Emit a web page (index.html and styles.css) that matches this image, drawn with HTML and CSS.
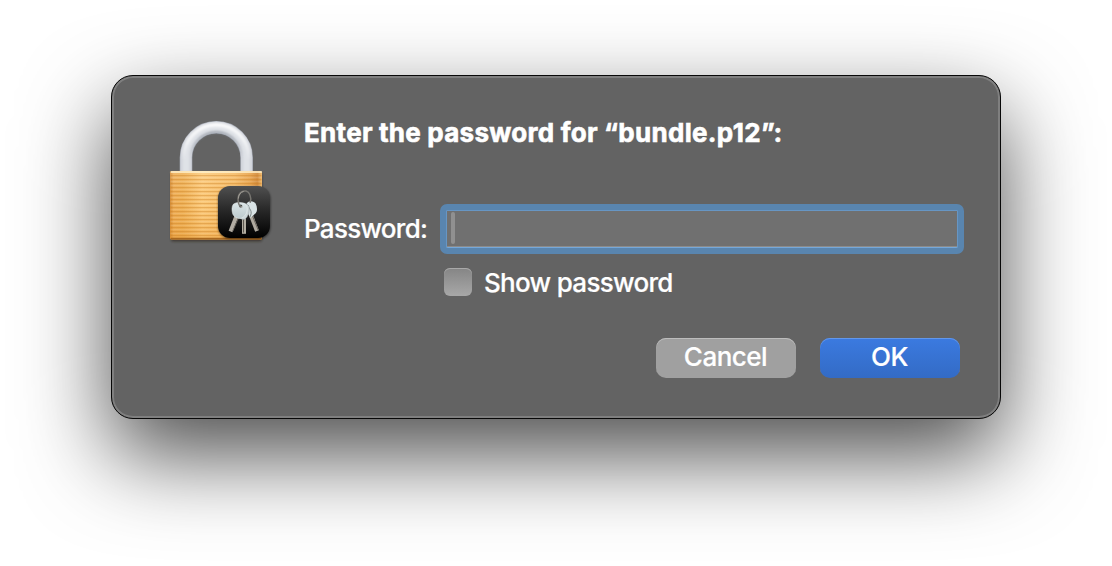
FILE: index.html
```html
<!DOCTYPE html>
<html lang="en">
<head>
<meta charset="utf-8">
<title>Password</title>
<link rel="stylesheet" href="styles.css">
</head>
<body>
<form class="dialog">
  <svg class="lock" viewBox="160 110 120 140" width="120" height="140" aria-hidden="true">
    <defs>
      <linearGradient id="brass" x1="170" x2="262" y1="0" y2="0" gradientUnits="userSpaceOnUse">
        <stop offset="0" stop-color="#d18a35"/><stop offset=".04" stop-color="#efb05a"/><stop offset=".14" stop-color="#efb258"/><stop offset=".35" stop-color="#fccb7d"/><stop offset=".7" stop-color="#f6bc67"/><stop offset=".87" stop-color="#e7a24b"/><stop offset=".95" stop-color="#d18735"/><stop offset="1" stop-color="#efb664"/>
      </linearGradient>
      <linearGradient id="brassFade" x1="0" x2="0" y1="0" y2="1">
        <stop offset="0" stop-color="#fff" stop-opacity=".12"/><stop offset=".5" stop-color="#e89a30" stop-opacity="0"/><stop offset="1" stop-color="#e2922b" stop-opacity=".35"/>
      </linearGradient>
      <pattern id="grooves" x="170" y="175" width="92" height="4" patternUnits="userSpaceOnUse">
        <rect width="92" height="1.2" fill="#c97b20" fill-opacity=".38"/><rect y="2" width="92" height="1" fill="#fff" fill-opacity=".1"/>
      </pattern>
      <linearGradient id="badge" x1="0" x2="0" y1="0" y2="1">
        <stop offset="0" stop-color="#505050"/><stop offset=".45" stop-color="#292929"/><stop offset="1" stop-color="#000"/>
      </linearGradient>
      <linearGradient id="key" x1="0" x2="0" y1="0" y2="1">
        <stop offset="0" stop-color="#dbe5e7"/><stop offset="1" stop-color="#bccacd"/>
      </linearGradient>
      <linearGradient id="shine" x1="0" x2="0" y1="121" y2="160" gradientUnits="userSpaceOnUse">
        <stop offset="0" stop-color="#fff" stop-opacity=".9"/><stop offset=".5" stop-color="#fff" stop-opacity=".6"/><stop offset="1" stop-color="#fff" stop-opacity="0"/>
      </linearGradient>
      <linearGradient id="shade" x1="0" x2="0" y1="130" y2="158" gradientUnits="userSpaceOnUse">
        <stop offset="0" stop-color="#858d97" stop-opacity=".75"/><stop offset="1" stop-color="#858d97" stop-opacity="0"/>
      </linearGradient>
      <filter id="soft" x="-10%" y="-10%" width="120%" height="120%"><feGaussianBlur stdDeviation="1.3"/></filter>
      <filter id="fine" x="-10%" y="-10%" width="120%" height="120%"><feGaussianBlur stdDeviation=".9"/></filter>
    </defs>
    <g fill="none">
      <path d="M186 172v-14.5a30.3 30.3 0 0 1 60.6 0V172" stroke="#a4a9b3" stroke-width="12.6"/>
      <path d="M186 172v-14.5a30.3 30.3 0 0 1 60.6 0V172" stroke="#d0d3da" stroke-width="11.4"/>
      <path d="M186 172v-14.5a30.3 30.3 0 0 1 60.6 0V172" stroke="#dfe2e7" stroke-width="7" filter="url(#fine)"/>
      <path d="M183.5 168v-10.5a32.8 32.8 0 0 1 65.6 0v10.5" stroke="url(#shine)" stroke-width="4" filter="url(#fine)"/>
      <path d="M191 170v-12.5a25.3 25.3 0 0 1 50.6 0v12.5" stroke="url(#shade)" stroke-width="2" filter="url(#fine)"/>
    </g>
    <rect x="171" y="173" width="91" height="68.5" rx="2" fill="#292015" opacity=".6" filter="url(#soft)"/>
    <rect x="170" y="171" width="92" height="68.5" rx="1.5" fill="url(#brass)"/>
    <rect x="170" y="171" width="92" height="68.5" rx="1.5" fill="url(#brassFade)"/>
    <rect x="170.5" y="175" width="91" height="61" fill="url(#grooves)"/>
    <rect x="170.5" y="171.3" width="91.5" height="1.5" rx=".7" fill="#fff4cf"/>
    <rect x="170.5" y="237.8" width="91" height="1.7" rx=".8" fill="#a8671f"/>
    <rect x="218" y="187" width="52.5" height="52" rx="12" fill="#000" opacity=".5" filter="url(#fine)"/>
    <rect x="218" y="186" width="52" height="52" rx="12" fill="url(#badge)"/>
    <g>
      <path d="M249.3 211l7.7 20" stroke="#b0aaa0" stroke-width="4"/>
      <path d="M251.3 213l6.9 17" stroke="#68635c" stroke-width="1"/>
      <path d="M246.7 203.5c1.8-3.2 7.4-2.9 9 .3 1.6 3.3 2 7.200-.3 9.8l-5 4.400-4.500-9z" fill="#d9e3e5"/>
      <path d="M248.200 205c.6 4.600 5.300 5.300 1.500 12.500" fill="none" stroke="#6f7878" stroke-width=".9"/>
      <path d="M237.300 214l-6.800 17.500" stroke="#b2ada3" stroke-width="4"/>
      <path d="M238.800 217l-6 14" stroke="#69645c" stroke-width="1"/>
      <path d="M244 214v19.800" stroke="#b2ada1" stroke-width="4"/>
      <path d="M243.500 219v13.500" stroke="#5e5951" stroke-width="1"/>
      <path d="M239.700 203.500c3-1.400 9.600-.3 9.600 4.800 0 4.400-1.500 9.500-4.800 11-2 .7-5.800-1-6.100-3.500z" fill="#ccd7d9" stroke="#909b9c" stroke-width=".5"/>
      <path d="M233.300 204.300c3-2.600 10-2.600 12.700.5 2.800 4 .8 11.300-4.800 13.500-3 .9-7.700-1.400-8.600-4.800-.8-3-1-6.900.7-9.200z" fill="url(#key)" stroke="#edf3f3" stroke-width=".5"/>
      <circle cx="240.700" cy="206" r="1.600" fill="#444846"/>
      <path d="M240.800 206.800c-3.700-3-3.600-10.800-.2-14.200 3.500-3 7.800-1.800 9.300 2.200 1.300 3 1 5.700.2 8" fill="none" stroke="#777570" stroke-width="1.500"/>
      <path d="M238.300 198.500c.2-3.600 2.200-6.400 5.400-7.200M241 206.300l1.600.8" fill="none" stroke="#aaa69e" stroke-width=".8"/>
    </g>
  </svg>
  <div class="content">
    <h1 class="title">Enter the password for “bundle.p12”:</h1>
    <div class="field-row">
      <span class="label">Password:</span>
      <div class="field"><span class="caret"></span></div>
    </div>
    <div class="check-row">
      <span class="checkbox"></span>
      <span class="show-label">Show password</span>
    </div>
    <div class="actions">
      <button class="button" type="button">Cancel</button>
      <button class="button primary" type="button">OK</button>
    </div>
  </div>
</form>
</body>
</html>
```
FILE: styles.css
```css
* { box-sizing: border-box; }
body {
  margin: 0;
  padding: 75px 111px 0;
  height: 566px;
  overflow: hidden;
  background: #fff;
  color: #fff;
  font: 500 26px/32px Inter, Roboto, sans-serif;
}
.dialog {
  display: flex;
  gap: 24px;
  width: 890px;
  height: 344px;
  padding: 34px 36px 0 48px;
  border: 1px solid #080808;
  border-radius: 22px;
  background: #636363;
  box-shadow: inset 0 0 0 2px #7f7f7f, 0 36px 88px rgba(0, 0, 0, .7);
}
.lock { flex: none; }
.content { flex: 1; display: flex; flex-direction: column; }
.title {
  margin: 7px 0 0;
  font-size: 26px;
  font-weight: 700;
  line-height: 32px;
  letter-spacing: .31px;
  word-spacing: -.4px;
  white-space: nowrap;
  -webkit-text-stroke: .6px #fff;
}
.field-row { display: flex; align-items: center; height: 50px; margin-top: 55px; }
.label { width: 136px; flex: none; white-space: nowrap; letter-spacing: -.72px; -webkit-text-stroke: .2px #fff; }
.field {
  width: 524px;
  height: 50px;
  padding: 2px 5px;
  border: 6px solid #5985af;
  border-radius: 7px;
  background: #707070;
  background-clip: padding-box;
  box-shadow: inset 0 1px #6796c4, inset 1px 0 #6796c4, inset -1px 0 #6796c4, inset 0 -1px #75a7d8, inset 0 -2px #8b8b8b;
}
.caret { display: block; width: 4px; height: 32px; border-radius: 2px; background: #909090; }
.check-row { display: flex; align-items: center; gap: 12px; height: 32px; margin: 12px 0 0 140px; }
.checkbox {
  width: 28px;
  height: 28px;
  border-radius: 6px;
  background: linear-gradient(#858585, #a8a8a8);
  box-shadow: inset 0 1px #a9a9a9;
}
.show-label { padding-top: 2px; white-space: nowrap; letter-spacing: -.7px; -webkit-text-stroke: .2px #fff; }
.actions { display: flex; justify-content: flex-end; gap: 24px; margin: 40px 4px 0 0; }
.button {
  width: 140px;
  height: 40px;
  padding: 0 1px 2px 0;
  border: 0;
  border-radius: 10px;
  background: #a0a0a0;
  box-shadow: inset 0 1px #bdbdbd;
  color: #fff;
  font: inherit;
  letter-spacing: -.5px;
  -webkit-text-stroke: .2px #fff;
}
.primary { background: linear-gradient(#3b7ae0, #336bc5); box-shadow: inset 0 1px #6297eb; }
```
